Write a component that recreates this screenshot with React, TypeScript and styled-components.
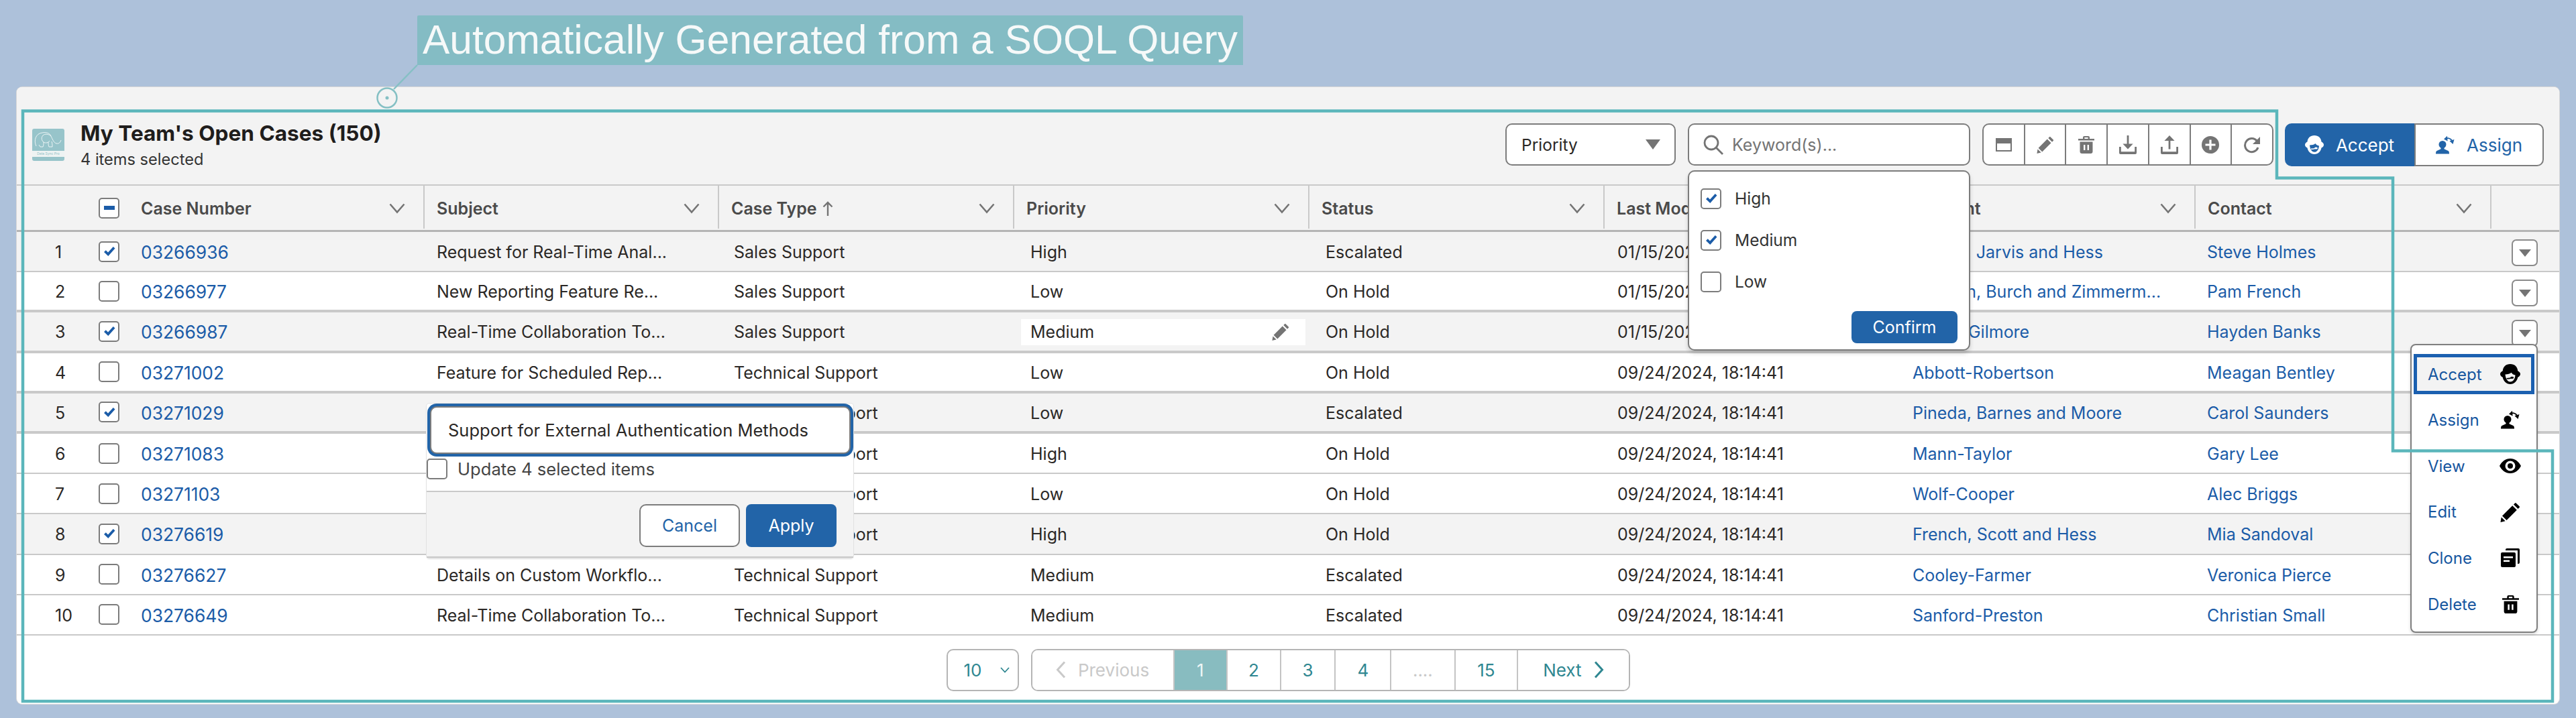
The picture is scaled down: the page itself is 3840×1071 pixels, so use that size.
import React from "react";
import styled, { createGlobalStyle, css } from "styled-components";

const BLUE = "#2264a8";
const LINK = "#1b5ca8";
const LINE = "#c9c9c9";
const TEAL = "#5bb6bb";
const GREY_ICON = "#747474";

const GlobalStyle = createGlobalStyle`
  html, body {
    margin: 0;
    padding: 0;
    background: #adc1da;
  }
  body {
    font-family: Inter, "Noto Sans", "Liberation Sans", sans-serif;
    font-size: 26px;
    color: #2b2826;
  }
  * {
    box-sizing: border-box;
  }
`;

const Page = styled.div`
  position: relative;
  width: 3840px;
  height: 1071px;
  overflow: hidden;
  background: #adc1da;
`;

const CalloutRow = styled.div`
  display: flex;
  height: 130px;
  padding: 23px 0 0 622px;
`;

const CalloutLabel = styled.div`
  height: 74px;
  padding: 0 8px;
  background: #84bcc4;
  color: #f6f9f9;
  font-family: "Liberation Sans", Arial, sans-serif;
  font-size: 60.5px;
  line-height: 72px;
  border-radius: 2px 2px 0 0;
  white-space: nowrap;
`;

const Overlay = styled.svg`
  position: absolute;
  top: 0;
  left: 0;
  z-index: 20;
  pointer-events: none;
`;

const Card = styled.div`
  width: 3790px;
  height: 920px;
  margin-left: 25px;
  background: #fff;
  border-radius: 8px;
  box-shadow: 0 0 0 1px #d8d8d8;
`;

const Header = styled.header`
  display: flex;
  height: 147px;
  padding: 0 23px;
  background: #f3f3f3;
  border-bottom: 2px solid ${LINE};
  border-radius: 8px 8px 0 0;
`;

const Logo = styled.div`
  display: flex;
  flex-direction: column;
  width: 48px;
  height: 48px;
  margin-top: 62px;
  padding-bottom: 6px;
  background: #97c4ca;
  border-radius: 3px;
  overflow: hidden;
`;

const LogoArt = styled.svg`
  width: 48px;
  height: 33px;
`;

const LogoText = styled.div`
  height: 9px;
  background: #eef3f3;
  color: #8fbfc5;
  font-size: 5px;
  line-height: 9px;
  text-align: center;
  white-space: nowrap;
`;

const TitleBlock = styled.div`
  flex: 1;
  margin: 49px 0 0 24px;
`;

const Title = styled.div`
  font-size: 31.6px;
  font-weight: 700;
  line-height: 40px;
  color: #1f1d1c;
`;

const Subtitle = styled.div`
  font-size: 23.6px;
  line-height: 38px;
  color: #333;
`;

const Controls = styled.div`
  display: flex;
  height: 64px;
  margin-top: 54px;
`;

const Field = styled.div<{ $width: number; $gap: number }>`
  position: relative;
  display: flex;
  align-items: center;
  width: ${(p) => p.$width}px;
  height: 63px;
  margin-right: ${(p) => p.$gap}px;
  background: #fff;
  border: 2px solid #7c7c7c;
  border-radius: 10px;
`;

const SelectText = styled.span`
  flex: 1;
  padding-left: 22px;
  font-size: 24.5px;
`;

const Caret = styled.span`
  width: 0;
  height: 0;
  margin-right: 21px;
  border-left: 11px solid transparent;
  border-right: 11px solid transparent;
  border-top: 15px solid ${GREY_ICON};
`;

const SearchIcon = styled.svg`
  width: 32px;
  height: 32px;
  margin-left: 20px;
  color: ${GREY_ICON};
`;

const Placeholder = styled.span`
  margin-left: 12px;
  font-size: 25px;
  color: #747474;
`;

const IconGroup = styled.div`
  display: flex;
  width: 434px;
  height: 63px;
  margin-right: 17px;
  background: #fff;
  border: 2px solid #7c7c7c;
  border-radius: 10px;
`;

const IconButton = styled.div`
  flex: 1;
  display: flex;
  align-items: center;
  justify-content: center;
  color: ${GREY_ICON};
  & + & {
    border-left: 2px solid #7c7c7c;
  }
`;

const ActionGroup = styled.div`
  display: flex;
  width: 386px;
  height: 64px;
`;

const ActionButton = styled.div<{ $primary?: boolean }>`
  display: flex;
  align-items: center;
  justify-content: center;
  gap: 18px;
  width: 193px;
  font-size: 26px;
  ${(p) =>
    p.$primary
      ? css`
          background: ${BLUE};
          color: #fff;
          border-radius: 10px 0 0 10px;
        `
      : css`
          background: #fff;
          color: ${BLUE};
          border: 2px solid #7c7c7c;
          border-radius: 0 10px 10px 0;
        `}
`;

const Dropdown = styled.div`
  position: absolute;
  top: 68px;
  left: -2px;
  z-index: 10;
  width: 421px;
  height: 269px;
  padding: 24px 17px 0;
  background: #fff;
  border: 2px solid #7c7c7c;
  border-radius: 10px;
  box-shadow: 0 4px 6px rgba(0, 0, 0, 0.16);
`;

const DropdownOption = styled.label`
  display: flex;
  align-items: center;
  gap: 20px;
  height: 62px;
  padding-bottom: 30px;
  font-size: 24.5px;
  color: #333;
`;

const DropdownFooter = styled.div`
  display: flex;
  justify-content: flex-end;
  margin-top: -2px;
`;

const PrimaryButton = styled.div<{ $width: number; $height: number }>`
  display: flex;
  align-items: center;
  justify-content: center;
  width: ${(p) => p.$width}px;
  height: ${(p) => p.$height}px;
  background: ${BLUE};
  color: #fff;
  font-size: 25px;
  border-radius: 8px;
`;

const Box = styled.span`
  flex: none;
  display: flex;
  align-items: center;
  justify-content: center;
  width: 31px;
  height: 31px;
  background: #fff;
  border: 2px solid #7c7c7c;
  border-radius: 5px;
  color: ${LINK};
`;

const MinusBar = styled.span`
  width: 16px;
  height: 6px;
  background: ${LINK};
`;

const gridColumns = css`
  display: grid;
  grid-template-columns: 122px 45px 441px 439px 440px 440px 440px 441px 440px 441px 101px;
`;

const HeadRow = styled.div`
  ${gridColumns}
  height: 69px;
  background: #f3f3f3;
  border-bottom: 3px solid #b5b5b5;
`;

const HeadCell = styled.div`
  display: flex;
  align-items: center;
  padding: 3px 27px 0 18px;
  height: 64px;
  font-size: 25px;
  font-weight: 600;
  color: #4a4a4a;
  border-right: 2px solid ${LINE};
`;

const HeadLabel = styled.span`
  flex: 1;
  display: flex;
  align-items: center;
  gap: 8px;
  white-space: nowrap;
`;

const BoxCell = styled.div`
  display: flex;
  align-items: center;
`;

const TableBody = styled.div`
  position: relative;
`;

const Row = styled.div<{ $selected: boolean; $thick: boolean }>`
  ${gridColumns}
  height: 60.2px;
  background: ${(p) => (p.$selected ? "#f3f3f3" : "#fff")};
  border-bottom: ${(p) => (p.$thick ? 4 : 2)}px solid ${LINE};
`;

const Cell = styled.div<{ $pad?: number; $link?: boolean }>`
  display: flex;
  align-items: center;
  padding-top: 2px;
  padding-left: ${(p) => p.$pad ?? 18}px;
  font-size: 25px;
  color: ${(p) => (p.$link ? LINK : "#2b2826")};
  white-space: nowrap;
  overflow: hidden;
`;

const CaseNumber = styled.span`
  font-size: 26.4px;
`;

const EditableValue = styled.div`
  display: flex;
  align-items: center;
  justify-content: space-between;
  width: 424px;
  height: 39px;
  margin-left: 10px;
  padding: 0 24px 0 14px;
  background: #fff;
  color: #2b2826;
`;

const PencilSlot = styled.span`
  display: flex;
  color: ${GREY_ICON};
`;

const RowAction = styled.div`
  display: flex;
  align-items: center;
  justify-content: center;
  width: 39px;
  height: 40px;
  margin: 11px 0 0 30px;
  background: #fff;
  border: 2px solid #8a8a8a;
  border-radius: 7px;
`;

const RowCaret = styled.span`
  width: 0;
  height: 0;
  border-left: 9px solid transparent;
  border-right: 9px solid transparent;
  border-top: 11px solid ${GREY_ICON};
`;

const Editor = styled.div`
  position: absolute;
  top: 256px;
  left: 611px;
  z-index: 10;
  width: 636px;
  height: 230px;
  background: #fff;
  border-radius: 4px;
  box-shadow: 0 0 0 1px #e2e2e2, 0 2px 2px rgba(0, 0, 0, 0.12);
`;

const EditorInput = styled.div`
  display: flex;
  align-items: center;
  width: 627px;
  height: 71px;
  margin: 4px 0 0 5px;
  padding-left: 25px;
  background: #fff;
  border: 2px solid #7c7c7c;
  border-radius: 10px;
  box-shadow: 0 0 0 4px ${BLUE};
  font-size: 25.5px;
  white-space: nowrap;
`;

const EditorCheck = styled.label`
  display: flex;
  align-items: center;
  gap: 15px;
  height: 31px;
  margin-top: 7px;
  color: #444;
  font-size: 25.6px;
`;

const EditorFooter = styled.div`
  display: flex;
  justify-content: flex-end;
  gap: 9px;
  height: 100px;
  margin-top: 17px;
  padding: 18px 25px 0 0;
  background: #f3f3f3;
  border-top: 2px solid ${LINE};
  border-bottom: 2px solid ${LINE};
`;

const CancelButton = styled.div`
  display: flex;
  align-items: center;
  justify-content: center;
  width: 150px;
  height: 64px;
  background: #fff;
  color: ${BLUE};
  border: 2px solid #7c7c7c;
  border-radius: 10px;
  font-size: 25px;
`;

const Menu = styled.div`
  position: absolute;
  top: 167px;
  right: 32px;
  z-index: 11;
  width: 190px;
  height: 431px;
  padding-top: 13px;
  background: #fff;
  border: 2px solid #7f7f7f;
  border-radius: 8px;
  box-shadow: 0 2px 4px rgba(0, 0, 0, 0.16);
`;

const MenuItem = styled.div<{ $active?: boolean }>`
  display: flex;
  align-items: center;
  justify-content: space-between;
  width: 180px;
  height: ${(p) => (p.$active ? 60 : 68.7)}px;
  margin: ${(p) => (p.$active ? "0 0 4px 3px" : "0 0 0 3px")};
  padding: 0 ${(p) => (p.$active ? 15 : 20)}px 0 ${(p) => (p.$active ? 16 : 21)}px;
  color: #16569f;
  font-size: 24px;
  background: ${(p) => (p.$active ? "#f3f3f3" : "transparent")};
  border: ${(p) => (p.$active ? `5px solid #1b60b0` : "none")};
`;

const MenuIcon = styled.span`
  display: flex;
  justify-content: center;
  width: 32px;
  color: #000;
`;

const Footer = styled.div`
  display: flex;
  justify-content: center;
  gap: 18px;
  padding-top: 20px;
`;

const PageSize = styled.div`
  display: flex;
  align-items: center;
  justify-content: space-between;
  width: 108px;
  height: 63px;
  padding: 0 12px 0 24px;
  color: #2f8791;
  border: 2px solid #b5b5b5;
  border-radius: 10px;
  font-size: 26px;
`;

const PageNav = styled.div`
  display: flex;
  width: 893px;
  height: 63px;
  border: 2px solid #b5b5b5;
  border-radius: 10px;
  overflow: hidden;
`;

const PageCell = styled.div<{ $width: number; $active?: boolean; $muted?: boolean }>`
  display: flex;
  align-items: center;
  justify-content: center;
  gap: 18px;
  width: ${(p) => p.$width}px;
  font-size: 26px;
  color: ${(p) => (p.$active ? "#eef6f6" : p.$muted ? "#c9c9c9" : "#2f8791")};
  background: ${(p) => (p.$active ? "#88bcc0" : "#fff")};
  & + & {
    border-left: 2px solid ${(p) => (p.$active ? "transparent" : "#c4c4c4")};
  }
`;

type IconProps = { size?: number };

const Chevron = () => (
  <svg width="24" height="16" viewBox="0 0 24 16" fill="none" stroke="#747474" strokeWidth="2.6">
    <path d="M1.5 1.5 12 13.5 22.5 1.5" />
  </svg>
);

const UpArrow = () => (
  <svg width="16" height="22" viewBox="0 0 16 22" fill="none" stroke="#747474" strokeWidth="2.4">
    <path d="M8 22V2M1.5 8.5 8 2l6.5 6.5" />
  </svg>
);

const Check = () => (
  <svg width="18" height="16" viewBox="0 0 18 16" fill="currentColor">
    <path d="M1 9 3.800 6.200 7 9.500 14.800 1 17.500 3.500 7.300 15z" />
  </svg>
);

const PreviewIcon = ({ size = 24 }: IconProps) => (
  <svg width={size} height={size} viewBox="0 0 24 24" fill="currentColor">
    <path fillRule="evenodd" d="M0 2h24v20H0zM2 4v16h20V4z" />
    <path d="M2 4h20v6H2z" />
  </svg>
);

const PencilIcon = ({ size = 26 }: IconProps) => (
  <svg width={size} height={size} viewBox="0 0 26 26" fill="currentColor">
    <path d="M20.5 1.2 24.8 5.5a1 1 0 0 1 0 1.4L23 8.7 17.3 3l1.8-1.8a1 1 0 0 1 1.4 0zM15.8 4.5 21.5 10.2 8.3 23.4 2.6 17.7zM1.5 19.4 6.6 24.5 0.4 26z" />
  </svg>
);

const TrashIcon = ({ size = 26 }: IconProps) => (
  <svg width={size} height={size} viewBox="0 0 26 26" fill="currentColor">
    <path fillRule="evenodd" d="M10 0h6a2 2 0 0 1 2 2v2h7v2.4H1V4h7V2a2 2 0 0 1 2-2zM10.4 2v2h5.2V2zM3.5 8.5h19V23a3 3 0 0 1-3 3h-13a3 3 0 0 1-3-3zM9 13v8h2.4v-8zM14.6 13v8H17v-8z" />
  </svg>
);

const DownloadIcon = ({ size = 28 }: IconProps) => (
  <svg width={size} height={size} viewBox="0 0 28 28" fill="currentColor">
    <path d="M12.6 0h2.8v12.5h6.2L14 20.5 6.4 12.5h6.2zM1 17h2.8v7.2h20.4V17H27v9a2 2 0 0 1-2 2H3a2 2 0 0 1-2-2z" />
  </svg>
);

const UploadIcon = ({ size = 28 }: IconProps) => (
  <svg width={size} height={size} viewBox="0 0 28 28" fill="currentColor">
    <path d="M14 0 21.6 8h-6.2v12.5h-2.8V8H6.4zM1 17h2.8v7.2h20.4V17H27v9a2 2 0 0 1-2 2H3a2 2 0 0 1-2-2z" />
  </svg>
);

const PlusCircleIcon = ({ size = 26 }: IconProps) => (
  <svg width={size} height={size} viewBox="0 0 26 26" fill="currentColor">
    <path fillRule="evenodd" d="M13 0a13 13 0 1 1 0 26 13 13 0 0 1 0-26zM11.4 5.5v6H5.500v3h5.900v6h3.200v-6h5.900v-3h-5.900v-6z" />
  </svg>
);

const RedoIcon = ({ size = 26 }: IconProps) => (
  <svg width={size} height={size} viewBox="0 0 26 26" fill="none">
    <path d="M20.5 7.5A10 10 0 1 0 22 17" stroke="currentColor" strokeWidth="3" />
    <path d="M25 1v11H14z" fill="currentColor" />
  </svg>
);

const AcceptIcon = ({ size = 30 }: IconProps) => (
  <svg width={size} height={size} viewBox="0 0 28 28" fill="currentColor">
    <path
      fillRule="evenodd"
      d="M14 0c6 0 10 3.600 10.500 9.500 2 1 3.500 2.500 3.500 4.500s-1.500 3.500-3.500 4.500C23.500 24 19.500 28 14 28S4.500 24 3.500 18.500C1.500 17.500 0 16 0 14s1.500-3.500 3.500-4.500C4 3.600 8 0 14 0zM7 14.500C7.500 20 10 24.800 14 24.800s6.500-3.600 7-9.300c-2.500-.5-4.500-1.700-5.500-3.500-2 1.800-5 2.500-8.500 2.500z"
    />
    <path d="M9 19.500c3 0 5-.3 7-1.300l.6 1.400c-2.200 1.200-4.600 1.500-7.600 1.500z" />
    <ellipse cx="16.500" cy="19" rx="2.400" ry="1.500" />
  </svg>
);

const AssignIcon = ({ size = 28 }: IconProps) => (
  <svg width={size} height={size} viewBox="0 0 28 28" fill="currentColor">
    <circle cx="10" cy="13.500" r="5.500" />
    <path d="M7.500 18v2.300L1.500 23C.5 23.500 0 25 0 27.500h20c0-2.500-.5-4-1.500-4.500l-6-2.700V18z" />
    <path d="M14.500 5.300C17.500 3.500 21.500 4 24 7.500" fill="none" stroke="currentColor" strokeWidth="2" />
    <path d="M17 0.800 12 5.600l5.600 2.800zM27.500 6 25.500 13l-5-4.800z" />
  </svg>
);

const EyeIcon = ({ size = 32 }: IconProps) => (
  <svg width={size} height={size} viewBox="0 0 32 32" fill="currentColor">
    <path
      fillRule="evenodd"
      d="M16 5c7 0 12.800 4.500 16 11-3.200 6.500-9 11-16 11S3.200 22.500 0 16C3.200 9.500 9 5 16 5zM16 8.500a7.500 7.500 0 1 0 0 15 7.500 7.500 0 0 0 0-15zM16 12a4 4 0 1 1 0 8 4 4 0 0 1 0-8z"
    />
  </svg>
);

const CloneIcon = ({ size = 28 }: IconProps) => (
  <svg width={size} height={size} viewBox="0 0 28 28" fill="currentColor">
    <path
      fillRule="evenodd"
      d="M2 6h18a2 2 0 0 1 2 2v18a2 2 0 0 1-2 2H2a2 2 0 0 1-2-2V8a2 2 0 0 1 2-2zM4 12v2.500h14V12zM4 17.500V20h9v-2.500z"
    />
    <path d="M7 3V2a2 2 0 0 1 2-2h17a2 2 0 0 1 2 2v19a2 2 0 0 1-2 2h-1V3z" />
  </svg>
);

const ChevronSmall = ({ dir, color }: { dir: "left" | "right" | "down"; color: string }) => {
  if (dir === "down") {
    return (
      <svg width="14" height="9" viewBox="0 0 14 9" fill="none" stroke={color} strokeWidth="1.800">
        <path d="M1 1l6 6.500L13 1" />
      </svg>
    );
  }
  return (
    <svg width="15" height="26" viewBox="0 0 15 26" fill="none" stroke={color} strokeWidth="3">
      <path d={dir === "left" ? "M13 1.500 2.500 13 13 24.500" : "M2 1.500 12.500 13 2 24.500"} />
    </svg>
  );
};

type CaseRow = {
  number: string;
  subject: string;
  type: string;
  priority: string;
  status: string;
  modified: string;
  account: string;
  contact: string;
  selected: boolean;
};

const SALES = "Sales Support";
const TECH = "Technical Support";
const JAN = "01/15/2025, 18:14:41";
const SEP = "09/24/2024, 18:14:41";

// subjects of rows 5-8 sit behind the inline editor, so they stay empty
const rows: CaseRow[] = [
  { number: "03266936", subject: "Request for Real-Time Anal...", type: SALES, priority: "High", status: "Escalated", modified: JAN, account: "Larson, Jarvis and Hess", contact: "Steve Holmes", selected: true },
  { number: "03266977", subject: "New Reporting Feature Re...", type: SALES, priority: "Low", status: "On Hold", modified: JAN, account: "Robison, Burch and Zimmerm...", contact: "Pam French", selected: false },
  { number: "03266987", subject: "Real-Time Collaboration To...", type: SALES, priority: "Medium", status: "On Hold", modified: JAN, account: "Harris-Gilmore", contact: "Hayden Banks", selected: true },
  { number: "03271002", subject: "Feature for Scheduled Rep...", type: TECH, priority: "Low", status: "On Hold", modified: SEP, account: "Abbott-Robertson", contact: "Meagan Bentley", selected: false },
  { number: "03271029", subject: "", type: TECH, priority: "Low", status: "Escalated", modified: SEP, account: "Pineda, Barnes and Moore", contact: "Carol Saunders", selected: true },
  { number: "03271083", subject: "", type: TECH, priority: "High", status: "On Hold", modified: SEP, account: "Mann-Taylor", contact: "Gary Lee", selected: false },
  { number: "03271103", subject: "", type: TECH, priority: "Low", status: "On Hold", modified: SEP, account: "Wolf-Cooper", contact: "Alec Briggs", selected: false },
  { number: "03276619", subject: "", type: TECH, priority: "High", status: "On Hold", modified: SEP, account: "French, Scott and Hess", contact: "Mia Sandoval", selected: true },
  { number: "03276627", subject: "Details on Custom Workflo...", type: TECH, priority: "Medium", status: "Escalated", modified: SEP, account: "Cooley-Farmer", contact: "Veronica Pierce", selected: false },
  { number: "03276649", subject: "Real-Time Collaboration To...", type: TECH, priority: "Medium", status: "Escalated", modified: SEP, account: "Sanford-Preston", contact: "Christian Small", selected: false },
];

const columns = ["Case Number", "Subject", "Case Type", "Priority", "Status", "Last Modified Date", "Account", "Contact"];

const toolIcons = [PreviewIcon, PencilIcon, TrashIcon, DownloadIcon, UploadIcon, PlusCircleIcon, RedoIcon];

const menuItems = [
  { label: "Assign", Icon: AssignIcon, size: 28 },
  { label: "View", Icon: EyeIcon, size: 32 },
  { label: "Edit", Icon: PencilIcon, size: 30 },
  { label: "Clone", Icon: CloneIcon, size: 28 },
  { label: "Delete", Icon: TrashIcon, size: 27 },
];

const pages = [
  { label: "1", width: 80, active: true },
  { label: "2", width: 80 },
  { label: "3", width: 82 },
  { label: "4", width: 83 },
  { label: "....", width: 96, muted: true },
  { label: "15", width: 94 },
];

const App: React.FC = () => {
  return (
    <Page>
      <GlobalStyle />
      <CalloutRow>
        <CalloutLabel>Automatically Generated from a SOQL Query</CalloutLabel>
      </CalloutRow>

      <Card>
        <Header>
          <Logo>
            <LogoArt viewBox="0 0 48 33" fill="none" stroke="#fff" strokeWidth="0.8">
              <path d="M6 26C2 18 5 7 15 6c5-1 11 0 13 5 2 4 4 10 8 11 4 1 6-2 7-5M28 11c-3-3-9-4-12-1-3 3-2 8 1 10M17 20c0 2 0 5-1 7h-4c-1-1-1-2-2-3M24 20c0 2 0 5 1 7h5c0-3 0-5-1-8" />
              <path d="M17 20c3 2 7 1 9-2" />
            </LogoArt>
            <LogoText>Data Sync Pro</LogoText>
          </Logo>
          <TitleBlock>
            <Title>My Team's Open Cases (150)</Title>
            <Subtitle>4 items selected</Subtitle>
          </TitleBlock>
          <Controls>
            <Field $width={254} $gap={18}>
              <SelectText>Priority</SelectText>
              <Caret />
            </Field>
            <Field $width={421} $gap={18}>
              <SearchIcon viewBox="0 0 32 32" fill="none" stroke="currentColor" strokeWidth="2.800">
                <circle cx="13" cy="13" r="10" />
                <path d="M20.500 20.500 30 30" />
              </SearchIcon>
              <Placeholder>Keyword(s)...</Placeholder>
              <Dropdown>
                <DropdownOption>
                  <Box><Check /></Box>High
                </DropdownOption>
                <DropdownOption>
                  <Box><Check /></Box>Medium
                </DropdownOption>
                <DropdownOption>
                  <Box />Low
                </DropdownOption>
                <DropdownFooter>
                  <PrimaryButton $width={158} $height={48}>Confirm</PrimaryButton>
                </DropdownFooter>
              </Dropdown>
            </Field>
            <IconGroup>
              {toolIcons.map((Icon, i) => (
                <IconButton key={i}>
                  <Icon />
                </IconButton>
              ))}
            </IconGroup>
            <ActionGroup>
              <ActionButton $primary>
                <AcceptIcon size={28} />
                Accept
              </ActionButton>
              <ActionButton>
                <AssignIcon />
                Assign
              </ActionButton>
            </ActionGroup>
          </Controls>
        </Header>

        <HeadRow>
          <div />
          <BoxCell>
            <Box><MinusBar /></Box>
          </BoxCell>
          {columns.map((label) => (
            <HeadCell key={label}>
              <HeadLabel>
                {label}
                {label === "Case Type" && <UpArrow />}
              </HeadLabel>
              <Chevron />
            </HeadCell>
          ))}
          <div />
        </HeadRow>

        <TableBody>
          {rows.map((row, i) => (
            <Row key={row.number} $selected={row.selected} $thick={i >= 1 && i <= 4}>
              <Cell $pad={57}>{i + 1}</Cell>
              <BoxCell>
                <Box>{row.selected && <Check />}</Box>
              </BoxCell>
              <Cell $link><CaseNumber>{row.number}</CaseNumber></Cell>
              <Cell>{row.subject}</Cell>
              <Cell $pad={22}>{row.type}</Cell>
              {i === 2 ? (
                <Cell $pad={0}>
                  <EditableValue>
                    {row.priority}
                    <PencilSlot>
                      <PencilIcon />
                    </PencilSlot>
                  </EditableValue>
                </Cell>
              ) : (
                <Cell $pad={24}>{row.priority}</Cell>
              )}
              <Cell $pad={24}>{row.status}</Cell>
              <Cell $pad={19}>{row.modified}</Cell>
              <Cell $link $pad={18}>{row.account}</Cell>
              <Cell $link $pad={17}>{row.contact}</Cell>
              <div>
                <RowAction>
                  <RowCaret />
                </RowAction>
              </div>
            </Row>
          ))}

          <Editor>
            <EditorInput>Support for External Authentication Methods</EditorInput>
            <EditorCheck>
              <Box />
              Update 4 selected items
            </EditorCheck>
            <EditorFooter>
              <CancelButton>Cancel</CancelButton>
              <PrimaryButton $width={135} $height={64}>Apply</PrimaryButton>
            </EditorFooter>
          </Editor>

          <Menu>
            <MenuItem $active>
              Accept
              <MenuIcon>
                <AcceptIcon />
              </MenuIcon>
            </MenuItem>
            {menuItems.map(({ label, Icon, size }) => (
              <MenuItem key={label}>
                <span>{label}</span>
                <MenuIcon>
                  <Icon size={size} />
                </MenuIcon>
              </MenuItem>
            ))}
          </Menu>
        </TableBody>

        <Footer>
          <PageSize>
            10
            <ChevronSmall dir="down" color="#2f8791" />
          </PageSize>
          <PageNav>
            <PageCell $width={211} $muted>
              <ChevronSmall dir="left" color="#c9c9c9" />
              Previous
            </PageCell>
            {pages.map((p) => (
              <PageCell key={p.label} $width={p.width} $active={p.active} $muted={p.muted}>
                {p.label}
              </PageCell>
            ))}
            <PageCell $width={167}>
              Next
              <ChevronSmall dir="right" color="#2f8791" />
            </PageCell>
          </PageNav>
        </Footer>
      </Card>

      <Overlay width="3840" height="1071" viewBox="0 0 3840 1071" fill="none">
        <path d="M622 97 587 133" stroke="#85c0c4" strokeWidth="2.500" />
        <circle cx="577" cy="146" r="14.500" stroke="#85c0c4" strokeWidth="2.500" />
        <circle cx="577" cy="146" r="2.500" fill="#85c0c4" />
        <path d="M34 165.500H3394V265.500H3567V672.500H3805V1046H34Z" stroke={TEAL} strokeWidth="4.500" />
      </Overlay>
    </Page>
  );
};

export default App;
